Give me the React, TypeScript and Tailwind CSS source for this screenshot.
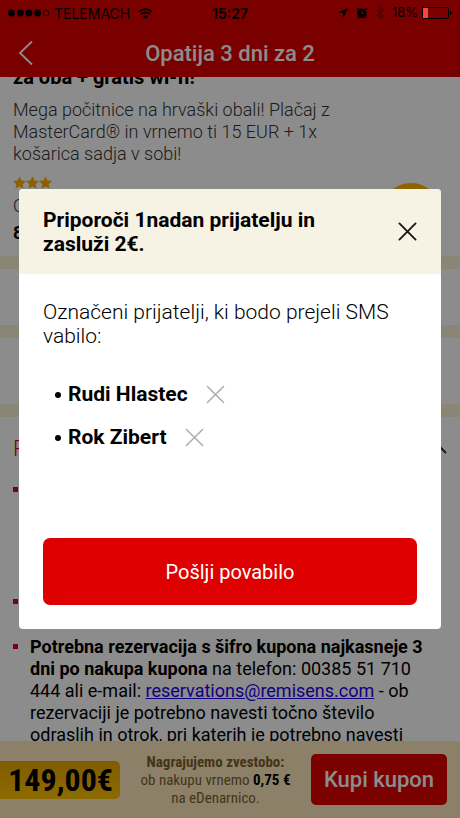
import { useState } from 'react';

const initialFriends = ['Rudi Hlastec', 'Rok Zibert'];

function Cross({ className }: { className: string }) {
  return (
    <svg className={className} viewBox="0 0 20 20" fill="none" stroke="currentColor" strokeLinecap="round">
      <path d="M1.5 1.5l17 17M18.5 1.5l-17 17" />
    </svg>
  );
}

function StatusBar() {
  return (
    <div className="relative z-10 grid grid-cols-[1fr_auto_1fr] items-center h-[26px] px-2 font-['Inter',sans-serif] text-[14px] text-black">
      <div className="flex items-center gap-1">
        <svg className="w-[42px] h-2" viewBox="0 0 42 8">
          <circle cx="3.5" cy="4" r="3.4" />
          <circle cx="12.3" cy="4" r="3.4" />
          <circle cx="21" cy="4" r="3.4" />
          <circle cx="29.6" cy="4" r="3.4" />
          <circle cx="38.2" cy="4" r="2.9" fill="none" stroke="black" strokeWidth="0.7" />
        </svg>
        <span>TELEMACH</span>
        <svg className="ml-1 w-[15px] h-[11px]" viewBox="0 0 15 11" fill="none" stroke="black" strokeWidth="1.7">
          <path d="M0.8 3.8C4.6 0.1 10.4 0.1 14.2 3.8" />
          <path d="M3.1 6.2C5.6 3.8 9.4 3.8 11.9 6.2" />
          <path d="M7.5 11L5 8.4C6.4 7.1 8.6 7.1 10 8.4Z" fill="black" stroke="none" />
        </svg>
      </div>
      <span className="font-semibold">15:27</span>
      <div className="flex items-center justify-end gap-2">
        <svg className="w-[10px] h-[10px]" viewBox="0 0 10 10">
          <path d="M10 0L5.6 10L5 5L0 4.4Z" />
        </svg>
        <svg className="w-3 h-3" viewBox="0 0 12 12">
          <circle cx="6" cy="6.4" r="4.8" />
          <path d="M0.8 2.8L2.8 1M11.2 2.8L9.2 1M2.8 10L2 11.4M9.2 10L10 11.4" stroke="black" strokeWidth="1.1" />
          <path d="M6 3.6V6.6H8.2" fill="none" stroke="#7a0000" strokeWidth="1" />
        </svg>
        <svg className="w-2 h-[14px] opacity-50" viewBox="0 0 8 14" fill="none" stroke="black" strokeWidth="1">
          <path d="M0.6 3.8L7.2 10L4 13V1L7.2 4L0.6 10.2" />
        </svg>
        <div className="flex items-center gap-1">
          <span className="text-[13px]">18%</span>
          <svg className="w-[30px] h-3" viewBox="0 0 30 12">
            <rect x="0.5" y="0.5" width="26" height="11" rx="1.5" fill="none" stroke="black" />
            <rect x="1" y="1" width="5" height="10" fill="#ff4538" />
            <path d="M28 3.8C30 4.4 30 7.6 28 8.2Z" />
          </svg>
        </div>
      </div>
    </div>
  );
}

function Stars() {
  return (
    <div className="flex mt-[11px]">
      {[1, 2, 3].map((n) => (
        <svg key={n} className="w-[13px] h-[13px]" viewBox="0 0 24 23" fill="#ffb000">
          <path d="M12 0l3.6 7.6 8.4 1.1-6.1 5.8 1.5 8.3L12 18.8l-7.4 4 1.5-8.3L0 8.7l8.4-1.1z" />
        </svg>
      ))}
    </div>
  );
}

export default function App() {
  const [open, setOpen] = useState(true);
  const [friends, setFriends] = useState(initialFriends);

  return (
    <div className="relative h-screen flex flex-col overflow-hidden bg-white font-['Roboto',sans-serif] text-black">
      <header className="shrink-0 h-[77px] bg-[#de0000]">
        <StatusBar />
        <div className="grid grid-cols-[32px_1fr_32px] items-center px-[11px] h-[54px]">
          <button aria-label="Nazaj" className="text-white">
            <svg className="w-8 h-[26px]" viewBox="0 0 32 26" fill="none" stroke="currentColor" strokeWidth="1.8">
              <path d="M21 1.5L9 13L21 24.5" />
            </svg>
          </button>
          <h1 className="text-center text-[22px] font-medium text-white">Opatija 3 dni za 2</h1>
        </div>
      </header>

      <main className="flex-1 min-h-0 overflow-hidden">
        <section className="relative -mt-3 px-[13px] h-[191px]">
          <h2 className="text-[20px] leading-[24px] font-bold">za oba + gratis wi-fi!</h2>
          <p className="mt-[10px] max-w-[360px] text-[18px] leading-[22px] font-light text-[#333]">
            Mega počitnice na hrvaški obali! Plačaj z MasterCard® in vrnemo ti 15 EUR + 1x košarica sadja v sobi!
          </p>
          <Stars />
          <p className="mt-[6px] text-[18px] leading-[22px] font-light text-[#333]">Opatija</p>
          <p className="mt-[5px] text-[18px] leading-[22px] font-bold">8 kupljenih</p>
          <span className="absolute right-[19px] top-[118px] size-[60px] rounded-full bg-[#ffb400]" />
        </section>
        <div className="h-[69px] border-t-[13px] border-[#fbf5d5]" />
        <div className="h-[79px] border-t-[13px] border-[#fbf5d5]" />
        <section className="border-t-[13px] border-[#fbf5d5] px-[13px]">
          <div className="flex items-center justify-between h-[62px]">
            <h2 className="text-[22px] font-light text-[#de0020]">Pogoji</h2>
            <svg className="w-5 h-3" viewBox="0 0 20 12" fill="none" stroke="#333" strokeWidth="2">
              <path d="M1 11L10 2L19 11" />
            </svg>
          </div>
          <ul className="text-[18px] leading-[22px]">
            <li className="flex h-[112px]">
              <span className="mt-2 size-[5px] bg-[#de0020]" />
            </li>
            <li className="flex h-[45px]">
              <span className="mt-2 size-[5px] bg-[#de0020]" />
            </li>
            <li className="flex gap-3 pr-3">
              <span className="shrink-0 mt-2 size-[5px] bg-[#de0020]" />
              <p>
                <b>Potrebna rezervacija s šifro kupona najkasneje 3 dni po nakupa kupona</b> na telefon: 00385 51 710
                444 ali e-mail:{' '}
                <a href="mailto:reservations@remisens.com" className="text-[#2200ee] underline">
                  reservations@remisens.com
                </a>{' '}
                - ob rezervaciji je potrebno navesti točno število odraslih in otrok, pri katerih je potrebno navesti
              </p>
            </li>
          </ul>
        </section>
      </main>

      <footer className="shrink-0 flex items-center justify-between h-[77px] pr-[13px] bg-[#ffebbd] font-['Roboto_Condensed','Roboto',sans-serif]">
        <div className="flex items-center justify-end w-[120px] h-[38px] pr-[7px] rounded-r-[5px] bg-linear-to-b from-[#e8a800] to-[#ffc400] text-[32px] font-bold">
          149,00€
        </div>
        <p className="text-center text-[15px] leading-[18px] text-[#7d6030]">
          <b>Nagrajujemo zvestobo:</b>
          <br />
          ob nakupu vrnemo <b className="text-black">0,75 €</b>
          <br />
          na eDenarnico.
        </p>
        <button className="w-[136px] h-[51px] rounded-[5px] bg-[#e00000] font-['Roboto',sans-serif] text-[22px] font-medium text-white">
          Kupi kupon
        </button>
      </footer>

      {open && (
        <div className="absolute inset-0 flex items-center px-[19px] bg-black/45">
          <div role="dialog" aria-labelledby="invite-title" className="w-full rounded-[4px] bg-white overflow-hidden">
            <div className="flex items-center justify-between gap-4 h-[85px] px-6 bg-[#f6f2e4]">
              <h2 id="invite-title" className="max-w-[290px] text-[21px] leading-[24px] font-bold">
                Priporoči 1nadan prijatelju in zasluži 2€.
              </h2>
              <button aria-label="Zapri" onClick={() => setOpen(false)}>
                <Cross className="size-[19px] stroke-2 text-[#1a1a10]" />
              </button>
            </div>
            <div className="px-6 pt-[26px] pb-6">
              <p className="text-[21px] leading-[24px] font-light">
                Označeni prijatelji, ki bodo prejeli SMS vabilo:
              </p>
              <ul className="mt-[25px] min-h-[142px] pl-3">
                {friends.map((name) => (
                  <li key={name} className="flex items-center h-[43px] text-[21px] font-bold">
                    <span className="mr-[7px] size-[6px] rounded-full bg-black" />
                    {name}
                    <button
                      aria-label={`Odstrani ${name}`}
                      className="ml-[18px]"
                      onClick={() => setFriends(friends.filter((f) => f !== name))}
                    >
                      <Cross className="size-[19px] stroke-[1.5] text-[#aaa]" />
                    </button>
                  </li>
                ))}
              </ul>
              <button className="mt-[23px] w-full h-[67px] rounded-[7px] bg-[#de0000] text-[20px] text-white">
                Pošlji povabilo
              </button>
            </div>
          </div>
        </div>
      )}
    </div>
  );
}
